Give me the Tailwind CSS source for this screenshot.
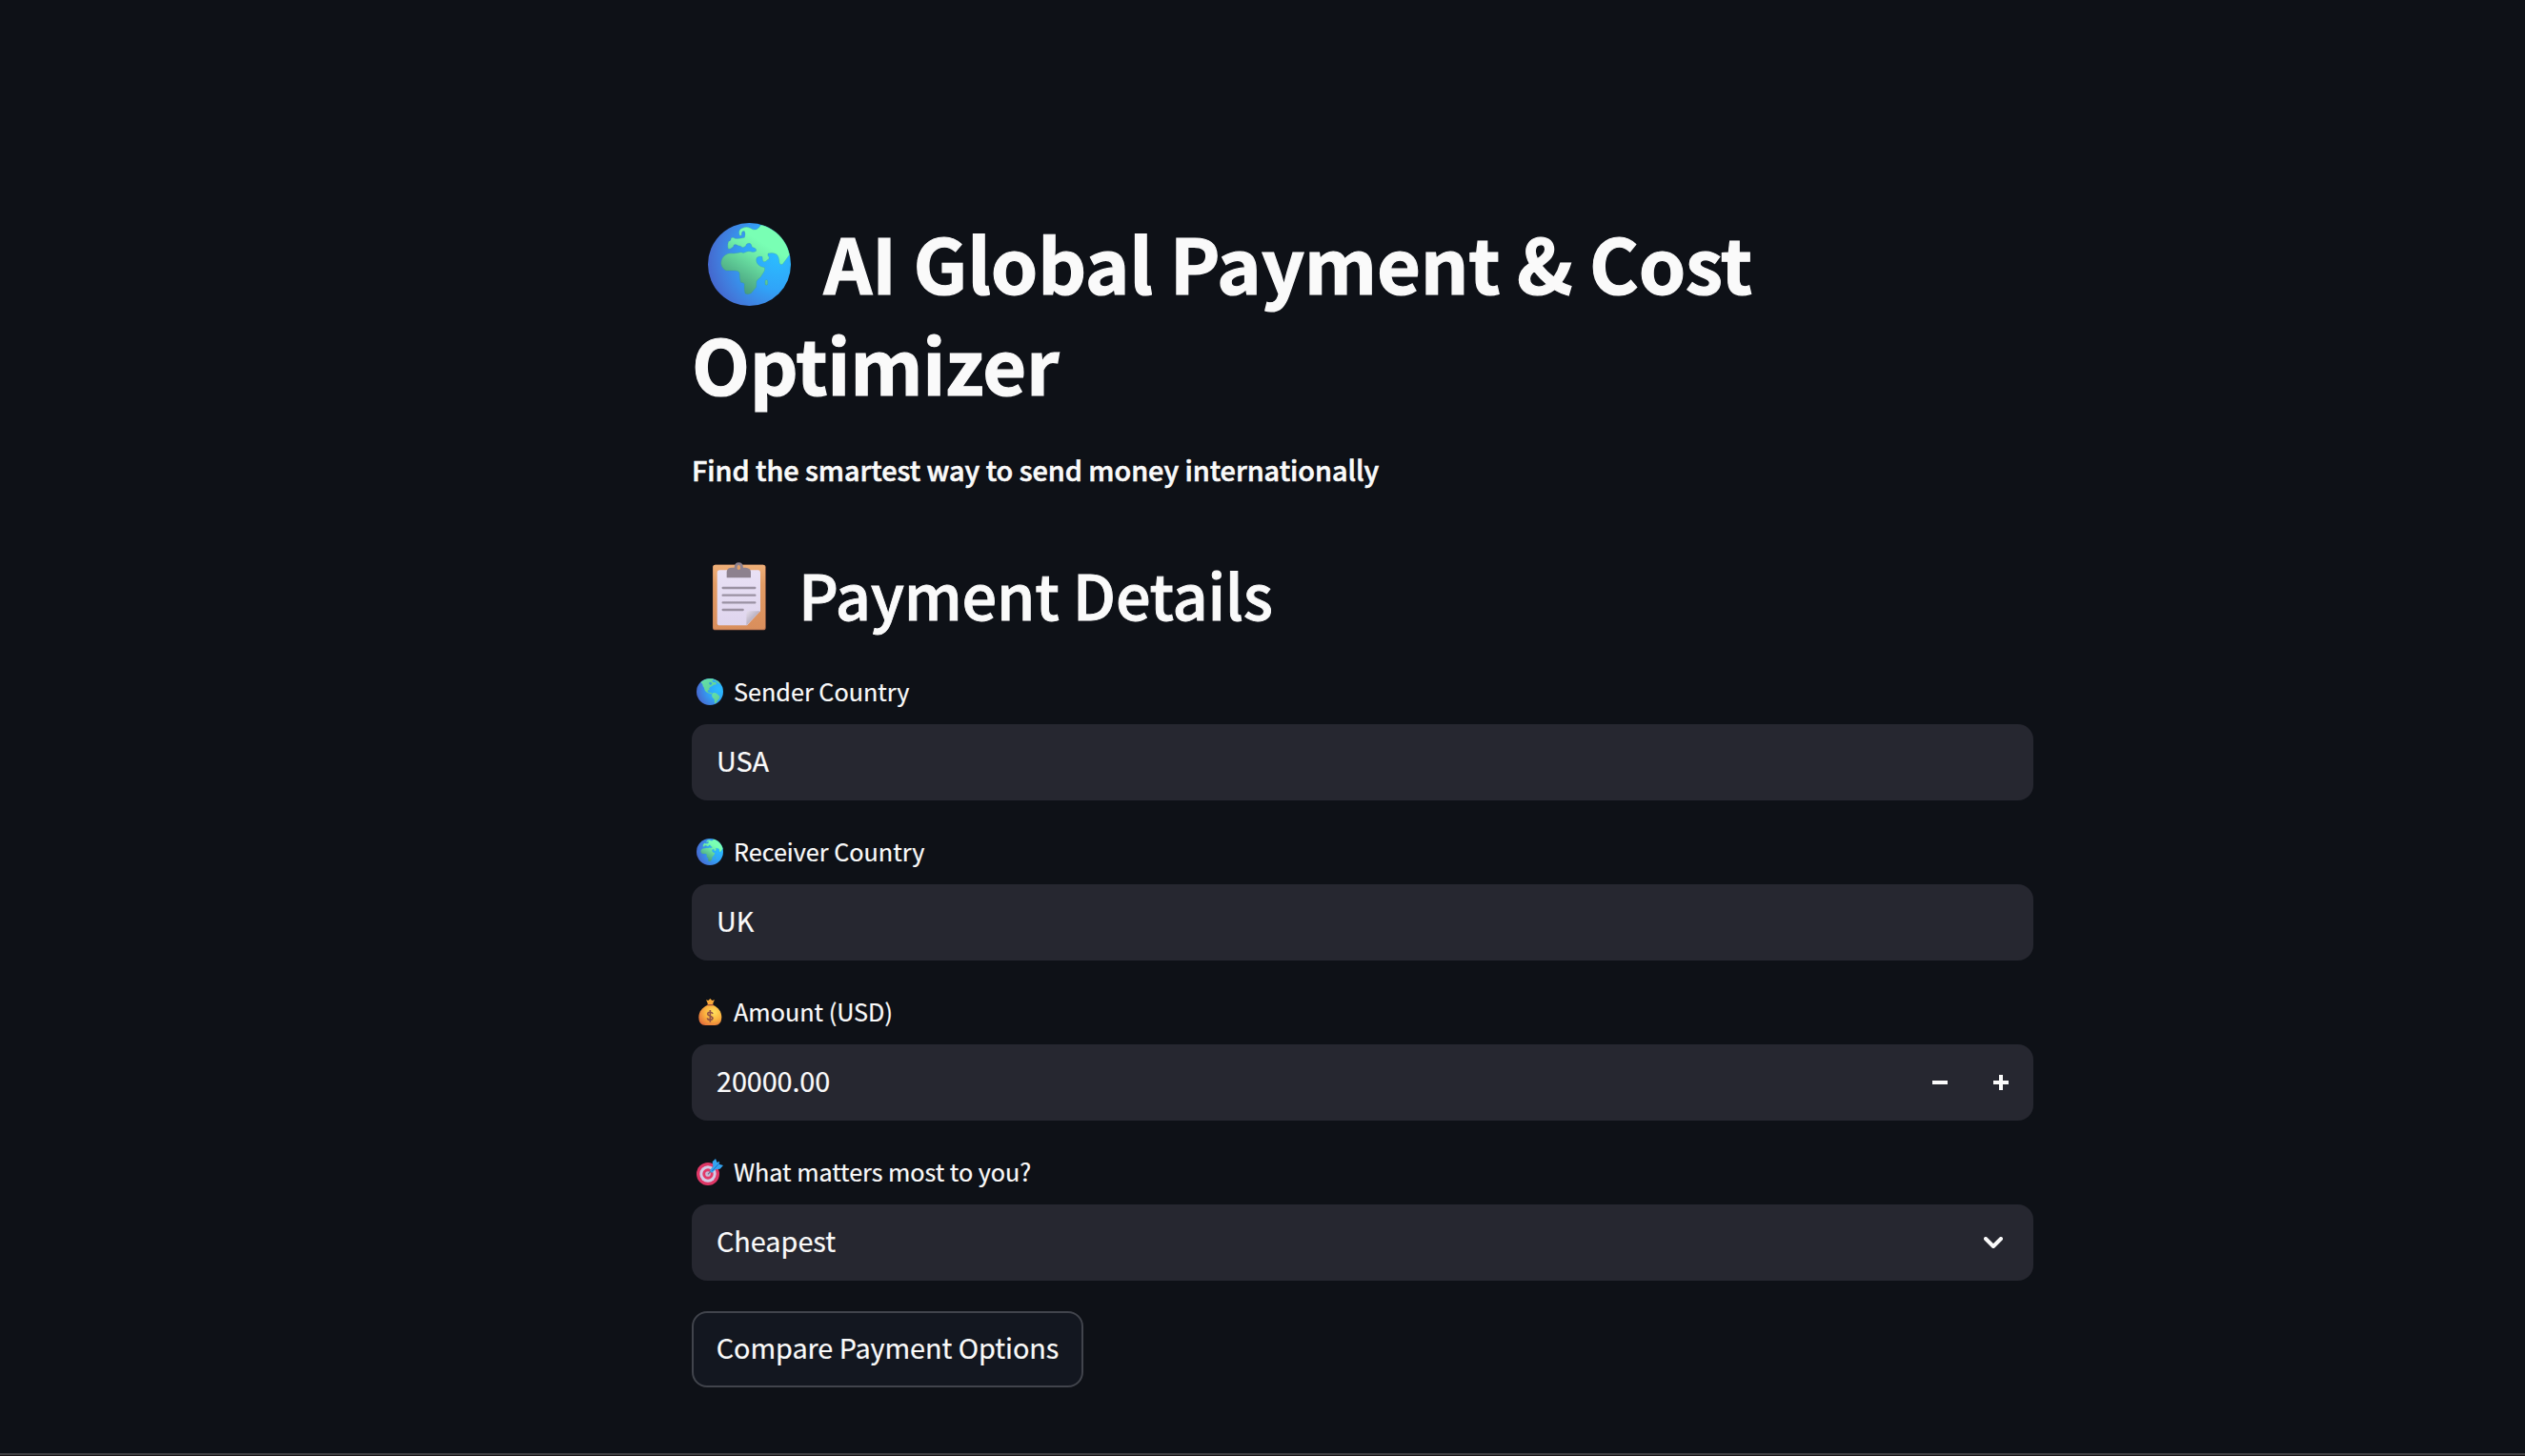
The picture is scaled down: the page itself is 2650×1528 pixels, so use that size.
<!DOCTYPE html>
<html lang="en">
<head>
  <meta charset="UTF-8">
  <meta name="viewport" content="width=device-width, initial-scale=1.0">
  <title>AI Global Payment &amp; Cost Optimizer</title>
  <script src="https://cdn.jsdelivr.net/npm/@tailwindcss/browser@4"></script>
</head>
<body class="h-screen overflow-hidden bg-[#0e1117] text-[#fafafa] font-['Noto_Sans_CJK_SC',sans-serif]">
  <!-- Shared icon definitions -->
  <svg class="absolute w-0 h-0" aria-hidden="true">
    <defs>
      <radialGradient id="sea" cx="0.85" cy="0.4" r="0.9">
        <stop offset="0" stop-color="#2bbdff" />
        <stop offset="0.45" stop-color="#30a4f8" />
        <stop offset="0.8" stop-color="#417bdc" />
        <stop offset="1" stop-color="#4562ca" />
      </radialGradient>
      <linearGradient id="land" gradientUnits="userSpaceOnUse" x1="250" y1="110" x2="165" y2="250">
        <stop offset="0" stop-color="#79ffb4" />
        <stop offset="0.25" stop-color="#70efaa" />
        <stop offset="1" stop-color="#489c7c" />
      </linearGradient>
      <linearGradient id="landWest" x1="0.2" y1="0" x2="0.8" y2="1">
        <stop offset="0" stop-color="#62dfaa" />
        <stop offset="1" stop-color="#62cf92" />
      </linearGradient>
      <symbol id="globeAfrica" viewBox="69 42 261 261">
        <circle cx="199.500" cy="172.500" r="130.500" fill="url(#sea)" />
        <g fill="url(#land)" stroke="#348f83" stroke-opacity="0.35" stroke-width="2" stroke-linejoin="round">
          <path d="M236 48C284 60 318 100 326 142L304 172Q298 176 294 168Q293 146 284 140Q272 134 258 138Q256 146 262 150Q262 158 256 158Q250 166 244 164Q240 160 240 148Q228 144 222 152Q218 164 228 174Q234 181 247 182Q250 190 244 198L234 214Q226 218 222 226L221 244L205 263Q194 269 186 264Q182 250 184 234Q182 229 172 229Q168 214 168 198Q164 192 154 192L126 192Q112 184 110 170Q110 154 122 144Q132 136 150 138Q162 136 174 134Q180 139 190 133Q194 130 204 132Q214 136 221 130Q222 123 216 121L208 118Q206 108 201 106Q195 105 190 109Q189 118 178 119Q172 113 164 113Q154 107 150 112Q150 120 144 120Q138 126 132 122Q130 108 134 100Q142 98 142 89Q148 85 154 91Q172 92 184 88Q188 76 184 68Q174 66 175 80Q168 86 167 74Q166 62 178 58Q190 52 202 58Q212 66 222 62Q230 58 236 48Z" />
          <rect x="249" y="221" width="8" height="17" rx="4" />
        </g>
      </symbol>
      <symbol id="globeAmericas" viewBox="9 36 84 84">
        <circle cx="51" cy="78" r="42" fill="url(#sea)" />
        <g fill="url(#landWest)">
          <path d="M22 48L34 40L46 37L61 37L64 41L57 43L62 48L70 48L72 55L63 56L58 60L52 63L48 69L51 73L45 73L44 78L49 80L56 81L60 86L55 85L42 80L36 75L34 70L32 64L29 60L28 54Z" />
          <path d="M60 82Q68 79 74 85L82 92Q83 99 76 104L70 114L66 114L65 102Q57 95 57 89Z" />
          <path d="M64 38Q78 42 86 54L78 51L72 46L66 43Z" />
        </g>
        <path d="M49 49L54 47L58 52L54 57L49 54Z" fill="#2f9fe0" />
      </symbol>
      <linearGradient id="board" x1="0" y1="0" x2="0" y2="1">
        <stop offset="0" stop-color="#efb079" />
        <stop offset="0.3" stop-color="#e29c64" />
        <stop offset="1" stop-color="#d98e5c" />
      </linearGradient>
      <linearGradient id="sheet" x1="0" y1="0" x2="0" y2="1">
        <stop offset="0" stop-color="#e9e1f5" />
        <stop offset="1" stop-color="#dfd5ee" />
      </linearGradient>
      <linearGradient id="fold" x1="0" y1="0" x2="0.7" y2="0.7">
        <stop offset="0" stop-color="#e6deef" />
        <stop offset="1" stop-color="#a79fae" />
      </linearGradient>
      <radialGradient id="gold" cx="0.65" cy="0.35" r="0.75">
        <stop offset="0" stop-color="#ffe05e" />
        <stop offset="0.5" stop-color="#fbb43f" />
        <stop offset="1" stop-color="#e5713a" />
      </radialGradient>
    </defs>
  </svg>

  <main class="ml-[726px] w-[1408px] pt-[222px]">
    <h1 class="text-[79.2px] leading-[105.6px] font-bold tracking-[-0.25px] [-webkit-text-stroke:1.2px_#fafafa]"><svg class="inline-block w-[87px] h-[87px] ml-[17px] mr-[34.5px] align-[-12px]"><use href="#globeAfrica" /></svg>AI Global Payment &amp; Cost Optimizer</h1>

    <p class="mt-9 text-[28.8px] leading-[48px] font-medium tracking-[-0.02px] [-webkit-text-stroke:0.6px_#fafafa]">Find the smartest way to send money internationally</p>

    <h2 class="mt-[63px] h-[86px] flex items-center text-[64.8px] leading-[86px] font-medium tracking-[-0.27px] [-webkit-text-stroke:0.9px_#fafafa]">
      <svg class="w-[56px] h-[72px] ml-[22px] mr-[34px] mt-[5px]" viewBox="69 62 168 216">
        <rect x="69" y="70" width="167" height="206" rx="8" fill="#b97350" />
        <rect x="70" y="70" width="164" height="203" rx="7" fill="url(#board)" />
        <path d="M91 87H212Q219 87 219 94V216L177 261H91Q83 261 83 253V95Q83 87 91 87Z" fill="url(#sheet)" />
        <path d="M175 261V221Q175 216 180 216H219Z" fill="url(#fold)" />
        <path d="M113 109V92Q114 79 130 79H137Q138 63 151 63Q164 63 165 79H172Q188 80 189 92V109Q189 111 187 111H115Q113 111 113 109Z" fill="#8d818e" />
        <rect x="146" y="71" width="10" height="15" rx="5" fill="#e0a06c" />
        <path d="M101 143H202M101 166H202M101 189H202M101 212H164" fill="none" stroke="#9a91a2" stroke-width="7" stroke-linecap="round" />
      </svg>
      <span>Payment Details</span>
    </h2>

    <form class="mt-[37.8px] flex flex-col gap-8 [-webkit-text-stroke:0.2px_#fafafa]">
      <div>
        <label class="flex items-center h-[42px] mb-[14px] text-[25.2px] leading-[42px]">
          <svg class="w-7 h-7 ml-[5px] mr-[11px] mt-[2px]"><use href="#globeAmericas" /></svg>
          <span>Sender Country</span>
        </label>
        <div class="flex items-center h-20 px-[26px] pb-[5px] rounded-2xl bg-[#262730] text-[28.8px]">USA</div>
      </div>

      <div>
        <label class="flex items-center h-[42px] mb-[14px] text-[25.2px] leading-[42px]">
          <svg class="w-7 h-7 ml-[5px] mr-[11px] mt-[2px]"><use href="#globeAfrica" /></svg>
          <span>Receiver Country</span>
        </label>
        <div class="flex items-center h-20 px-[26px] pb-[5px] rounded-2xl bg-[#262730] text-[28.8px]">UK</div>
      </div>

      <div>
        <label class="flex items-center h-[42px] mb-[14px] text-[25.2px] leading-[42px]">
          <svg class="w-7 h-7 ml-[5px] mr-[11px] mt-[2px]" viewBox="48 54 84 84">
            <path d="M82 66L78 58L85 60L91 54L97 60L105 58L101 66L99 74H84Z" fill="#f7a83a" />
            <path d="M82 75H101C115 81 127 94 127 112C127 130 118 138 106 138H76C63 138 55 130 55 112C55 94 68 81 82 75Z" fill="url(#gold)" />
            <path d="M82 72H101V76H82Z" fill="#a4533f" />
            <path d="M99 102C98 96 84 94 83 102C83 110 99 107 99 116C98 124 83 122 82 115M91 90V128" fill="none" stroke="#915246" stroke-width="5" />
          </svg>
          <span>Amount (USD)</span>
        </label>
        <div class="flex items-center h-20 px-[26px] rounded-2xl bg-[#262730] text-[28.8px]">
          <span class="grow pb-[5px] tracking-[-0.1px]">20000.00</span>
          <svg class="w-4 h-4 mr-12" viewBox="0 0 16 16" fill="#fafafa"><path d="M0 6h16v4H0z" /></svg>
          <svg class="w-4 h-4" viewBox="0 0 16 16" fill="#fafafa"><path d="M6 0h4v6h6v4h-6v6H6v-6H0V6h6z" /></svg>
        </div>
      </div>

      <div>
        <label class="flex items-center h-[42px] mb-[14px] text-[25.2px] leading-[42px]">
          <svg class="w-7 h-7 ml-[5px] mr-[11px] mt-[2px]" viewBox="48 48 84 84">
            <circle cx="84" cy="96" r="36" fill="#df3766" />
            <circle cx="84" cy="96" r="26" fill="#d3cbe6" />
            <circle cx="84" cy="96" r="17" fill="#e23868" />
            <circle cx="84" cy="96" r="8.500" fill="#c9b9d6" />
            <path d="M84 97L100 80" stroke="#6a7391" stroke-width="4" />
            <path d="M90 85L100 72L98 58L108 48L113 60L120 56L119 65L132 69L122 80L108 82L96 93Z" fill="#34a3f0" />
            <path d="M97 87L120 62" stroke="#1c6fc8" stroke-width="3" />
          </svg>
          <span class="tracking-[-0.04px]">What matters most to you?</span>
        </label>
        <div class="flex items-center h-20 pl-[26px] pr-8 rounded-2xl bg-[#262730] text-[28.8px]">
          <span class="grow pb-[5px]">Cheapest</span>
          <svg class="w-5 h-3" viewBox="0 0 20 12" fill="none" stroke="#fafafa" stroke-width="4" stroke-linecap="round" stroke-linejoin="round"><path d="M2 2l8 8 8-8" /></svg>
        </div>
      </div>

      <button type="button" class="flex items-center justify-center w-[411px] h-20 pb-[5px] rounded-2xl border-2 border-[#41444c] bg-[#131720] text-[28.8px] tracking-[-0.06px] whitespace-nowrap">Compare Payment Options</button>
    </form>
  </main>

  <!-- Window edge along the bottom -->
  <div class="fixed inset-x-0 bottom-0 h-[3px] bg-[#1b1517] border-t-2 border-[#3e3e40]"></div>
</body>
</html>
